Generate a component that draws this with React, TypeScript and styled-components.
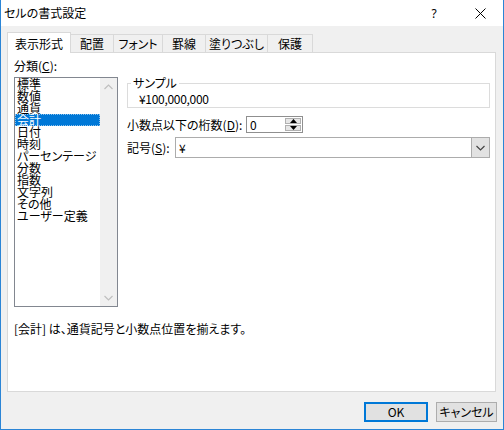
import React from 'react';
import styled, { createGlobalStyle } from 'styled-components';

const Global = createGlobalStyle`
  html, body { margin: 0; padding: 0; width: 504px; height: 430px; overflow: hidden; }
  body {
    font-family: "Noto Sans CJK JP", "Noto Sans", sans-serif;
    font-size: 12px;
    color: #000;
    font-feature-settings: "palt";
  }
  * { box-sizing: border-box; }
`;

const Window = styled.div`
  width: 504px;
  height: 430px;
  border: 1px solid #2b85d6;
  border-top: none;
  background: #f0f0f0;
  display: flex;
  flex-direction: column;
`;

const TitleBar = styled.div`
  height: 26px;
  flex-shrink: 0;
  background: #fff;
  display: flex;
  align-items: stretch;
`;

const Title = styled.div`
  flex: 1;
  padding-left: 3px;
  display: flex;
  align-items: center;
  font-size: 12px;
  line-height: 12px;
`;

const CaptionButton = styled.div`
  width: 46px;
  display: flex;
  align-items: center;
  justify-content: center;
  font-family: "Noto Sans", sans-serif;
  font-size: 12px;
  color: #000;
`;

const Body = styled.div`
  flex: 1;
  display: flex;
  flex-direction: column;
  padding: 0 7px 0 6px;
`;

const TabRow = styled.div`
  height: 26px;
  flex-shrink: 0;
  display: flex;
  align-items: flex-end;
  position: relative;
  z-index: 1;
`;

const Tab = styled.div<{ $w: number; $active?: boolean }>`
  width: ${p => p.$w}px;
  height: ${p => (p.$active ? 21 : 18)}px;
  margin-bottom: ${p => (p.$active ? -1 : 0)}px;
  margin-left: -1px;
  &:first-child { margin-left: 0; }
  border: 1px solid #d9d9d9;
  border-bottom: none;
  background: ${p => (p.$active ? '#fff' : '#f0f0f0')};
  position: relative;
  z-index: ${p => (p.$active ? 2 : 1)};
  padding-top: ${p => (p.$active ? 5 : 3)}px;
  text-align: center;
  line-height: 12px;
  font-size: 12px;
  white-space: nowrap;
`;

const Panel = styled.div`
  flex: 1;
  border: 1px solid #d9d9d9;
  background: #fff;
  padding: 7px 5px 0 6px;
  display: flex;
  flex-direction: column;
`;

const TopRow = styled.div`
  display: flex;
  align-items: flex-start;
`;

const LeftCol = styled.div`
  width: 104px;
  display: flex;
  flex-direction: column;
`;

const Label = styled.div`
  line-height: 12px;
  font-size: 12px;
  white-space: nowrap;
`;

const ListLabel = styled(Label)`
  margin-bottom: 5px;
`;

const U = styled.span`
  text-decoration: underline;
  text-underline-offset: 1px;
`;

const ListBox = styled.div`
  height: 230px;
  border: 1px solid #828790;
  display: flex;
  background: #fff;
`;

const Items = styled.div`
  flex: 1;
  display: flex;
  flex-direction: column;
`;

const Item = styled.div<{ $selected?: boolean }>`
  height: 12px;
  line-height: 12px;
  padding-left: 2px;
  white-space: nowrap;
  font-size: 12px;
  background: ${p => (p.$selected ? '#0078d7' : 'transparent')};
  color: ${p => (p.$selected ? '#fff' : '#000')};
  outline: ${p => (p.$selected ? '1px dotted rgba(255,255,255,0.55)' : 'none')};
  outline-offset: -1px;
`;

const ScrollBar = styled.div`
  width: 17px;
  background: #f0f0f0;
  display: flex;
  flex-direction: column;
  justify-content: space-between;
  align-items: center;
`;

const ScrollArrow = styled.div`
  height: 17px;
  width: 17px;
  display: flex;
  align-items: center;
  justify-content: center;
`;

const RightCol = styled.div`
  flex: 1;
  margin-left: 9px;
  display: flex;
  flex-direction: column;
`;

const GroupBox = styled.fieldset`
  margin: 17px 0 0 0;
  padding: 4px 6px 2px 11px;
  border: 1px solid #dcdcdc;
  min-width: 0;
`;

const Legend = styled.legend`
  padding: 0 2px;
  margin-left: -8px;
  line-height: 12px;
  font-size: 12px;
`;

const SampleText = styled.div`
  line-height: 12px;
  font-size: 12px;
  letter-spacing: -0.3px;
`;

const FieldRow = styled.div<{ $gap: number; $h: number }>`
  margin-top: ${p => p.$gap}px;
  height: ${p => p.$h}px;
  display: flex;
  align-items: center;
`;

const FieldLabel = styled(Label)<{ $w: number }>`
  width: ${p => p.$w}px;
  flex-shrink: 0;
`;

const SpinBox = styled.div`
  width: 57px;
  height: 17px;
  border: 1px solid #8f8f8f;
  display: flex;
  align-items: stretch;
  background: #fff;
`;

const InputValue = styled.div`
  flex: 1;
  padding-left: 3px;
  line-height: 15px;
  font-size: 12px;
`;

const SpinButtons = styled.div`
  width: 17px;
  display: flex;
  flex-direction: column;
  padding: 1px 1px 1px 0;
  gap: 1px;
`;

const SpinButton = styled.div`
  flex: 1;
  background: #e6e6e6;
  border: 1px solid #b0b0b0;
  display: flex;
  align-items: center;
  justify-content: center;
`;

const Select = styled.div`
  flex: 1;
  height: 21px;
  border: 1px solid #acacac;
  display: flex;
  align-items: stretch;
  background: #fff;
`;

const SelectValue = styled.div`
  flex: 1;
  padding-left: 3px;
  line-height: 19px;
  font-size: 12px;
`;

const DropButton = styled.div`
  width: 18px;
  background: #e2e2e2;
  border-left: 1px solid #acacac;
  display: flex;
  align-items: center;
  justify-content: center;
`;

const Description = styled.div`
  margin-top: 16px;
  line-height: 12px;
  font-size: 12px;
  white-space: nowrap;
`;

const Footer = styled.div`
  height: 37px;
  flex-shrink: 0;
  display: flex;
  justify-content: flex-end;
  align-items: flex-start;
  padding-top: 10px;
  gap: 8px;
  margin-right: -1px;
`;

const Button = styled.div<{ $w: number; $default?: boolean }>`
  width: ${p => p.$w}px;
  height: 20px;
  background: #e1e1e1;
  border: 1px solid ${p => (p.$default ? '#0078d7' : '#adadad')};
  box-shadow: ${p => (p.$default ? 'inset 0 0 0 1px #0078d7' : 'none')};
  display: flex;
  align-items: center;
  justify-content: center;
  font-size: 12px;
  line-height: 12px;
`;

const Chevron = ({ up, color }: { up?: boolean; color: string }) => (
  <svg width="9" height="6" viewBox="0 0 9 6">
    <polyline
      points={up ? '0.5,5 4.5,1 8.5,5' : '0.5,1 4.5,5 8.5,1'}
      fill="none"
      stroke={color}
      strokeWidth="1.2"
    />
  </svg>
);

const Triangle = ({ up }: { up?: boolean }) => (
  <svg width="7" height="4" viewBox="0 0 7 4">
    <polygon points={up ? '0,4 3.5,0 7,4' : '0,0 3.5,4 7,0'} fill="#000" />
  </svg>
);

const categories = [
  '標準', '数値', '通貨', '会計', '日付', '時刻', 'パーセンテージ',
  '分数', '指数', '文字列', 'その他', 'ユーザー定義',
];

const tabs: { label: string; w: number }[] = [
  { label: '表示形式', w: 64 },
  { label: '配置', w: 44 },
  { label: 'フォント', w: 50 },
  { label: '罫線', w: 44 },
  { label: '塗りつぶし', w: 63 },
  { label: '保護', w: 46 },
];

export default function App() {
  return (
    <>
      <Global />
      <Window>
        <TitleBar>
          <Title>セルの書式設定</Title>
          <CaptionButton>?</CaptionButton>
          <CaptionButton>
            <svg width="11" height="11" viewBox="0 0 11 11">
              <line x1="0.5" y1="0.5" x2="10.5" y2="10.5" stroke="#000" strokeWidth="1" />
              <line x1="10.5" y1="0.5" x2="0.5" y2="10.5" stroke="#000" strokeWidth="1" />
            </svg>
          </CaptionButton>
        </TitleBar>
        <Body>
          <TabRow>
            {tabs.map((t, i) => (
              <Tab key={t.label} $w={t.w} $active={i === 0}>
                {t.label}
              </Tab>
            ))}
          </TabRow>
          <Panel>
            <TopRow>
              <LeftCol>
                <ListLabel>
                  分類(<U>C</U>):
                </ListLabel>
                <ListBox>
                  <Items>
                    {categories.map(c => (
                      <Item key={c} $selected={c === '会計'}>
                        {c}
                      </Item>
                    ))}
                  </Items>
                  <ScrollBar>
                    <ScrollArrow>
                      <Chevron up color="#bfbfbf" />
                    </ScrollArrow>
                    <ScrollArrow>
                      <Chevron color="#bfbfbf" />
                    </ScrollArrow>
                  </ScrollBar>
                </ListBox>
              </LeftCol>
              <RightCol>
                <GroupBox>
                  <Legend>サンプル</Legend>
                  <SampleText>¥100,000,000</SampleText>
                </GroupBox>
                <FieldRow $gap={8} $h={17}>
                  <FieldLabel $w={119}>
                    小数点以下の桁数(<U>D</U>):
                  </FieldLabel>
                  <SpinBox>
                    <InputValue>0</InputValue>
                    <SpinButtons>
                      <SpinButton>
                        <Triangle up />
                      </SpinButton>
                      <SpinButton>
                        <Triangle />
                      </SpinButton>
                    </SpinButtons>
                  </SpinBox>
                </FieldRow>
                <FieldRow $gap={4} $h={21}>
                  <FieldLabel $w={48}>
                    記号(<U>S</U>):
                  </FieldLabel>
                  <Select>
                    <SelectValue>¥</SelectValue>
                    <DropButton>
                      <Chevron color="#444" />
                    </DropButton>
                  </Select>
                </FieldRow>
              </RightCol>
            </TopRow>
            <Description>[会計] は、通貨記号と小数点位置を揃えます。</Description>
          </Panel>
          <Footer>
            <Button $w={64} $default>
              OK
            </Button>
            <Button $w={61}>キャンセル</Button>
          </Footer>
        </Body>
      </Window>
    </>
  );
}
